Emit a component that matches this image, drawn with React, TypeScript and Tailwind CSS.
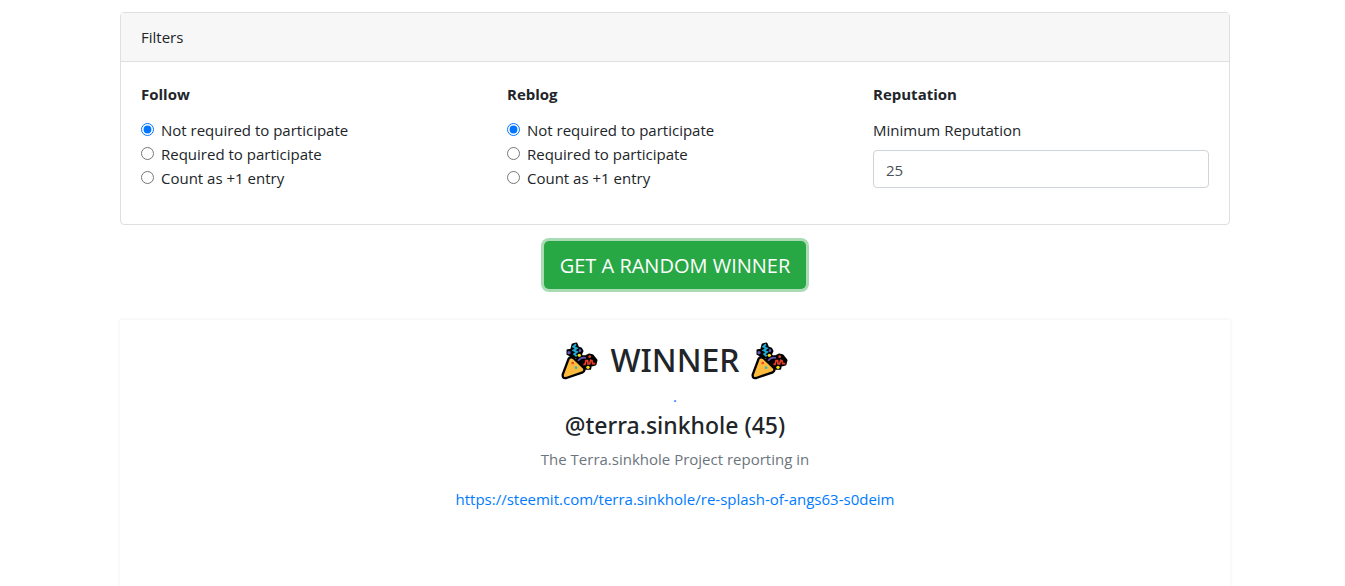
import { useState } from "react";

const rules = ["Not required to participate", "Required to participate", "Count as +1 entry"];

function RuleGroup({ title, name }: { title: string; name: string }) {
  const [selected, setSelected] = useState(0);
  return (
    <fieldset className="min-w-0">
      <legend className="mb-3 text-[15px] leading-6 font-bold">{title}</legend>
      {rules.map((rule, index) => (
        <label key={rule} className="flex items-start gap-[7px]">
          <input
            type="radio"
            name={name}
            checked={selected === index}
            onChange={() => setSelected(index)}
            className="mt-[5px] size-[13px] shrink-0 accent-[#0075ff]"
          />
          {rule}
        </label>
      ))}
    </fieldset>
  );
}

function PartyPopper() {
  return (
    <svg viewBox="34 15 120 120" className="size-10" aria-hidden="true">
      <g fill="#000" stroke="#000" strokeWidth="7" strokeLinejoin="round">
        <path d="M57 46 L68 45 L72 29 L83 26 L88 38 L97 41 L101 48 L97 56 L98 66 L84 68 L66 61 L57 57 Z" />
        <path d="M84 74 L99 64 L112 64 L121 59 L131 61 L143 76 L140 88 L126 92 L124 101 L113 101 L99 94 Z" />
      </g>
      <path
        d="M60 71 Q66 63 74 69 L105 98 Q111 107 102 112 L53 129 Q41 132 42 119 Z"
        fill="#fdbb3e"
        stroke="#000"
        strokeWidth="7"
        strokeLinejoin="round"
      />
      <path d="M82 28 L74 35 L84 40 L75 46 L85 51 L77 57 L84 64" fill="none" stroke="#20a8d5" strokeWidth="6" />
      <path d="M88 77 Q98 65 112 69" fill="none" stroke="#6558b8" strokeWidth="5" />
      <path d="M104 88 L109 88 L112 77 L117 77 L118 87 L123 87 L126 76 L130 77 L132 86 L140 86" fill="none" stroke="#ed3b27" strokeWidth="5" />
      <circle cx="61" cy="53" r="5" fill="#695bc0" />
      <circle cx="94" cy="47" r="4" fill="#695bc0" />
      <circle cx="92" cy="61" r="5" fill="#f9df16" />
      <circle cx="118" cy="97" r="5" fill="#f9df16" />
      <circle cx="123" cy="65" r="4" fill="#ed4c24" />
      <circle cx="72" cy="84" r="4" fill="#f04423" />
      <circle cx="82" cy="98" r="4" fill="#35b9b8" />
    </svg>
  );
}

export default function App() {
  const [reputation, setReputation] = useState("25");
  return (
    <div className="flex h-screen flex-col overflow-hidden bg-white pt-3 pl-[5px] font-['Open_Sans',sans-serif] text-[15px] leading-6 text-[#212529]">
      <main className="mx-auto flex w-full max-w-[1110px] flex-1 flex-col">
        <section className="rounded border border-[#dfdfdf]">
          <h2 className="border-b border-[#dfdfdf] bg-[#f7f7f7] px-5 py-3">Filters</h2>
          <div className="grid grid-cols-3 gap-[30px] p-5">
            <RuleGroup title="Follow" name="follow" />
            <RuleGroup title="Reblog" name="reblog" />
            <div className="mb-4">
              <h3 className="mb-3 font-bold">Reputation</h3>
              <label htmlFor="reputation" className="mb-2 block">
                Minimum Reputation
              </label>
              <input
                id="reputation"
                type="text"
                inputMode="numeric"
                value={reputation}
                onChange={(event) => setReputation(event.target.value)}
                className="block h-[38px] w-full rounded border border-[#ced4da] px-3 pt-0.5 text-[#495057]"
              />
            </div>
          </div>
        </section>

        <button
          type="button"
          className="mt-4 h-12 self-center rounded-[5px] bg-[#28a745] px-4 pt-0.5 text-[20px] text-white ring-3 ring-[#28a745]/40"
        >
          GET A RANDOM WINNER
        </button>

        <section className="mt-[31px] -mb-3 flex flex-1 flex-col items-center pt-5 text-center shadow-[0_0_4px_rgba(0,0,0,0.075)]">
          <h1 className="flex items-center gap-2.5 font-['Noto_Sans',sans-serif] text-[32px] leading-10 font-medium">
            <PartyPopper />
            WINNER
            <PartyPopper />
          </h1>
          <a href="#winner" className="mt-1 leading-6 text-[#007bff]">
            .
          </a>
          <h2
            id="winner"
            className="mt-[3px] font-['Noto_Sans',sans-serif] text-[23px] leading-7 font-medium"
          >
            @terra.sinkhole (45)
          </h2>
          <p className="mt-2 text-[#6c757d]">The Terra.sinkhole Project reporting in</p>
          <a
            href="https://steemit.com/terra.sinkhole/re-splash-of-angs63-s0deim"
            className="mt-4 text-[#007bff]"
          >
            https://steemit.com/terra.sinkhole/re-splash-of-angs63-s0deim
          </a>
        </section>
      </main>
    </div>
  );
}
